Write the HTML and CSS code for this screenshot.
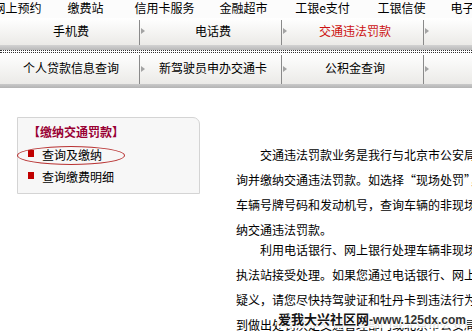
FILE: index.html
```html
<!DOCTYPE html>
<html lang="zh-CN">
<head>
<meta charset="utf-8">
<title>交通违法罚款</title>
<link rel="stylesheet" href="styles.css">
</head>
<body>
<nav class="topnav">
  <span class="nav-item first">网上预约</span>
  <span class="nav-item">缴费站</span>
  <span class="nav-item">信用卡服务</span>
  <span class="nav-item">金融超市</span>
  <span class="nav-item">工银e支付</span>
  <span class="nav-item">工银信使</span>
  <span class="nav-item">电子银行卡</span>
</nav>
<div class="tabs tabs1">
  <div class="tab first"><span class="arrow"></span><span class="tab-label">手机费</span></div>
  <div class="tab"><span class="arrow"></span><span class="tab-label">电话费</span></div>
  <div class="tab"><span class="arrow"></span><span class="tab-label active">交通违法罚款</span></div>
  <div class="tab"><span class="arrow"></span><span class="tab-label">燃气费</span></div>
</div>
<div class="band band1"></div>
<div class="dots"></div>
<div class="tabs tabs2">
  <div class="tab first"><span class="arrow"></span><span class="tab-label">个人贷款信息查询</span></div>
  <div class="tab"><span class="arrow"></span><span class="tab-label">新驾驶员申办交通卡</span></div>
  <div class="tab"><span class="arrow"></span><span class="tab-label">公积金查询</span></div>
  <div class="tab"><span class="arrow"></span><span class="tab-label">社保查询</span></div>
</div>
<div class="band band2"></div>
<div class="content">
  <aside class="sidebar">
    <h3 class="side-title">【缴纳交通罚款】</h3>
    <ul class="side-list">
      <li><span class="bullet"></span>查询及缴纳</li>
      <li><span class="bullet"></span>查询缴费明细</li>
    </ul>
    <span class="circle"></span>
  </aside>
  <main class="article">
    <p class="para">交通违法罚款业务是我行与北京市公安局公安交通管理局合作推出的业务，客户可通过我行查<br>询并缴纳交通违法罚款。如选择“现场处罚”，请输入处罚决定书编号；如选择“非现场处罚”，请输入<br>车辆号牌号码和发动机号，查询车辆的非现场处罚记录，并选择需要缴纳的罚款记录进行缴<br>纳交通违法罚款。</p>
    <p class="para second">利用电话银行、网上银行处理车辆非现场违法记录后，无需再到交通<br>执法站接受处理。如果您通过电话银行、网上银行缴纳罚款后对处罚有<br>疑义，请您尽快持驾驶证和牡丹卡到违法行为发生地的交通支队申请复议，<br>到做出处罚决定交通管理部门或北京市公安局接受处理。</p>
  </main>
</div>
<div class="watermark"><span class="wm-cn">爱我大兴社区网</span><span class="wm-en">-www.125dx.com</span></div>
</body>
</html>
```
FILE: styles.css
```css
* {
  box-sizing: border-box;
}

body {
  margin: 0;
  width: 472px;
  height: 335px;
  overflow: hidden;
  position: relative;
  background: #fff;
  color: #000;
  font-family: "Noto Sans CJK SC", "Liberation Sans", sans-serif;
  font-size: 12px;
}

/* top text navigation */
.topnav {
  display: flex;
  height: 18px;
  line-height: 16px;
  margin-left: -11px;
  background: #fcfcfc;
  white-space: nowrap;
}

.nav-item {
  flex: 0 0 79px;
  text-align: center;
}

.nav-item.first {
  flex-basis: 57px;
}

/* tab rows */
.tabs {
  display: flex;
  margin-left: -2px;
  padding-top: 2px;
  background: linear-gradient(#ffffff, #ebeae7);
  white-space: nowrap;
}

.tabs1 {
  height: 27px;
}

.tabs2 {
  height: 31px;
}

.tab {
  flex: 0 0 142px;
  display: flex;
  align-items: flex-start;
  border-right: 1px solid #8a8a8a;
}

.arrow {
  flex-shrink: 0;
  width: 0;
  height: 0;
  margin-left: 1px;
  border-left: 4px solid #a3a3a3;
  border-top: 3px solid transparent;
  border-bottom: 3px solid transparent;
}

.tab.first .arrow {
  visibility: hidden;
}

.tab-label {
  flex: 1;
  text-align: center;
}

.tabs1 .tab-label {
  line-height: 21px;
}

.tabs1 .arrow {
  margin-top: 8px;
}

.tabs2 .tab-label {
  line-height: 26px;
}

.tabs2 .arrow {
  margin-top: 11px;
}

.tab-label.active {
  color: #cc1111;
}

.band1 {
  height: 5px;
  background: linear-gradient(#d2d2d2, #b9b9b9);
}

.dots {
  height: 3px;
  border-top: 1px dotted #333;
  border-bottom: 1px dotted #333;
}

.band2 {
  height: 4px;
  background: linear-gradient(#c9c9c9, #b3b3b3);
}

/* content area */
.content {
  display: flex;
  align-items: flex-start;
  padding: 29px 0 0 17px;
}

.sidebar {
  position: relative;
  flex-shrink: 0;
  width: 183px;
  height: 77px;
  padding: 3px 0 6px 10px;
  border: 1px solid #d4d4d4;
  border-top-right-radius: 7px;
  background: #f7f7f7;
}

.side-title {
  margin: 0;
  font-size: 12px;
  line-height: 22px;
  font-weight: bold;
  color: #990033;
}

.side-list {
  margin: 0;
  padding: 0;
  list-style: none;
}

.side-list li {
  display: flex;
  align-items: center;
  height: 22px;
}

.bullet {
  width: 6px;
  height: 7px;
  margin-right: 8px;
  margin-top: -2px;
  background: #c00000;
}

.circle {
  position: absolute;
  left: -1px;
  top: 28px;
  width: 108px;
  height: 19px;
  border: 1px solid #b83232;
  border-radius: 50%;
}

.article {
  flex-shrink: 0;
  width: 520px;
  margin: 25px 0 0 36px;
}

.para {
  margin: 0;
  line-height: 25px;
  text-indent: 24px;
  white-space: nowrap;
}

.para.second {
  margin-top: -5px;
}

/* site watermark over the page */
.watermark {
  position: absolute;
  left: 277px;
  top: 311px;
  padding: 0 1px;
  font-weight: bold;
  line-height: 16px;
  color: #151515;
  white-space: nowrap;
  background: rgba(255, 255, 255, 0.85);
  text-shadow: 1px 0 0 #fff, -1px 0 0 #fff, 0 1px 0 #fff, 0 -1px 0 #fff, 1px 1px 1px #ddd;
}

.wm-cn {
  font-size: 13px;
}

.wm-en {
  font-family: "Liberation Sans", sans-serif;
  font-size: 12px;
  color: #333;
}
```
